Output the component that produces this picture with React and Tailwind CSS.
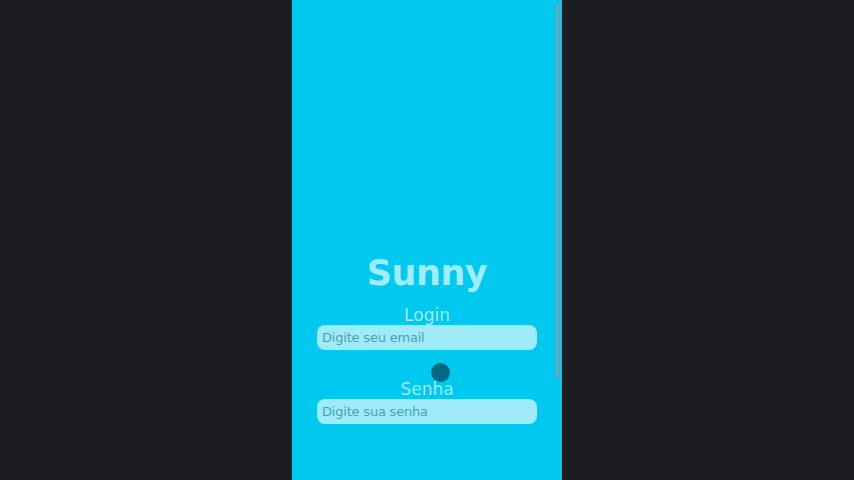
export default function App() {
  return (
    <div className="w-[854px] h-[480px] bg-[#1b1d21] flex justify-center overflow-hidden" style={{ fontFamily: '"DejaVu Sans", Verdana, sans-serif' }}>
      <div className="relative w-[270px] h-[480px] bg-[#00c8ef] flex flex-col items-center pt-[253px]">
        <h1 className="text-[35px] font-bold text-[#a0ecfa] leading-[40px] tracking-[-0.5px]">Sunny</h1>
        <div className="mt-[12px] text-[17px] text-[#a0ecfa] leading-[20px]">Login</div>
        <div className="w-[220px] h-[25px] rounded-[8px] bg-[#a0ebfa] flex items-center px-[5px] text-[13px] text-[#4a9fb3] tracking-[-0.2px]">Digite seu email</div>
        <div className="mt-[13px] ml-[26px] w-[19px] h-[19px] rounded-full bg-[#006a80]"></div>
        <div className="-mt-[3px] text-[17px] text-[#a0ecfa] leading-[20px]">Senha</div>
        <div className="w-[220px] h-[25px] rounded-[8px] bg-[#a0ebfa] flex items-center px-[5px] text-[13px] text-[#4a9fb3] tracking-[-0.2px]">Digite sua senha</div>
        <div className="absolute right-[3px] top-[3px] w-[3px] h-[374px] bg-[#5aaec0]"></div>
      </div>
    </div>
  );
}
